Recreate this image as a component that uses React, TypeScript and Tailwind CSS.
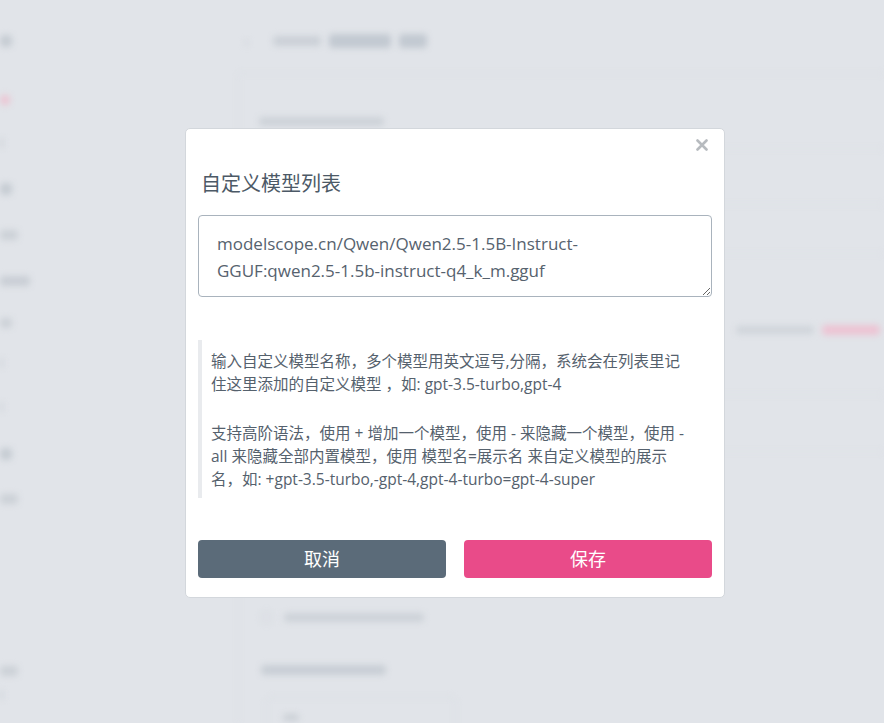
import React from "react";

const font = { fontFamily: '"Open Sans", "Noto Sans CJK SC", sans-serif' };

function Background() {
  return (
    <div className="absolute inset-0 blur-[3px] text-[#9aa3ad]">
      {/* sidebar blurred items */}
      <div className="absolute left-0 top-0 w-[60px] flex flex-col text-[13px]">
        <div className="mt-[35px] h-[12px] w-[12px] bg-[#c6ccd3] rounded-sm" />
        <div className="mt-[48px] h-[10px] w-[10px] bg-[#ecc6d4] rounded-sm" />
        <div className="mt-[33px] h-[10px] w-[3px] bg-[#cdd2d8]" />
        <div className="mt-[35px] h-[12px] w-[12px] bg-[#c6ccd3] rounded-sm" />
        <div className="mt-[35px] h-[10px] w-[18px] bg-[#ccd1d7] rounded-sm" />
        <div className="mt-[36px] h-[10px] w-[30px] bg-[#c9ced5] rounded-sm" />
        <div className="mt-[32px] h-[10px] w-[12px] bg-[#ccd1d7] rounded-sm" />
        <div className="mt-[30px] h-[10px] w-[3px] bg-[#d0d5da]" />
        <div className="mt-[34px] h-[10px] w-[3px] bg-[#d0d5da]" />
        <div className="mt-[36px] h-[12px] w-[12px] bg-[#c6ccd3] rounded-sm" />
        <div className="mt-[34px] h-[10px] w-[18px] bg-[#ccd1d7] rounded-sm" />
        <div className="mt-[162px] h-[10px] w-[18px] bg-[#ccd1d7] rounded-sm" />
        <div className="mt-[14px] h-[10px] w-[3px] bg-[#d0d5da]" />
      </div>
      {/* header */}
      <div className="absolute left-[244px] top-[30px] flex items-center gap-4 h-[22px]">
        <span className="text-[16px] text-[#c2c8cf]">‹</span>
        <div className="h-[10px] w-[48px] bg-[#cbd0d7] rounded-sm ml-2" />
        <div className="h-[14px] w-[62px] bg-[#c2c9d1] rounded-sm -ml-2" />
        <div className="h-[14px] w-[28px] bg-[#c2c9d1] rounded-sm -ml-2" />
      </div>
      {/* main card border */}
      <div className="absolute left-[238px] top-[73px] right-0 bottom-0 border-l border-t border-[#d8dce1]">
        <div className="ml-[20px] mt-[43px] h-[9px] w-[125px] bg-[#cdd2d8] rounded-sm" />
        <div className="mt-[22px] border-t border-[#dbdfe4]" />
        <div className="mt-[55px] border-t border-[#dbdfe4]" />
        <div className="mt-[48px] border-t border-[#dbdfe4]" />
        <div className="ml-[497px] mt-[71px] flex gap-2 items-center">
          <div className="h-[8px] w-[78px] bg-[#cfd4da] rounded-sm" />
          <div className="h-[10px] w-[58px] bg-[#edc3d3] rounded-sm" />
        </div>
        <div className="mt-[59px] border-t border-[#dbdfe4]" />
        <div className="mt-[56px] border-t border-[#dbdfe4]" />
        <div className="ml-[22px] mt-[160px] flex items-center gap-3">
          <div className="h-[11px] w-[11px] border border-[#ccd2d8] rounded-sm" />
          <div className="h-[9px] w-[140px] bg-[#cdd2d8] rounded-sm" />
        </div>
        <div className="ml-[22px] mt-[42px] h-[10px] w-[125px] bg-[#c8ced5] rounded-sm" />
        <div className="ml-[27px] mt-[22px] h-[44px] w-[190px] border border-[#d6dbe0] rounded-md px-4 pt-4">
          <div className="h-[7px] w-[16px] bg-[#cbd0d6] rounded-sm" />
        </div>
      </div>
    </div>
  );
}

export default function App() {
  return (
    <div className="relative w-[884px] h-[723px] overflow-hidden bg-[#e1e4e9]" style={font}>
      <Background />
      <div className="absolute left-[185px] top-[128px] w-[540px] bg-white border border-[#d3d7dc] rounded-[5px] px-3 pt-[33px] pb-[19px]">
        <button className="absolute right-[16px] top-[10px] w-[12px] h-[12px] flex items-center justify-center">
          <svg width="12" height="12" viewBox="0 0 12 12">
            <path d="M1.5 1.5 L10.5 10.5 M10.5 1.5 L1.5 10.5" stroke="#b7bbbf" strokeWidth="2.6" strokeLinecap="round" />
          </svg>
        </button>
        <h2 className="text-[20px] leading-[44px] text-[#4c5966] pl-[3px]">自定义模型列表</h2>
        <textarea
          className="mt-[9px] block w-full h-[82px] border border-[#a9b3bd] rounded-[4px] px-[18px] pt-[14px] text-[17px] leading-[27px] text-[#56626e] resize-y outline-none"
          defaultValue="modelscope.cn/Qwen/Qwen2.5-1.5B-Instruct-GGUF:qwen2.5-1.5b-instruct-q4_k_m.gguf"
          style={font}
        />
        <div className="mt-[43px] border-l-4 border-[#e9ebee] pl-[9px] pr-[4px] pt-[10px] pb-[7px] text-[15.5px] leading-[23px] text-[#55616d] whitespace-nowrap">
          <p>
            输入自定义模型名称，多个模型用英文逗号,分隔，系统会在列表里记
            <br />
            住这里添加的自定义模型 ，如: gpt-3.5-turbo,gpt-4
          </p>
          <p className="mt-[26px]">
            支持高阶语法，使用 + 增加一个模型，使用 - 来隐藏一个模型，使用 -
            <br />
            all 来隐藏全部内置模型，使用 模型名=展示名 来自定义模型的展示
            <br />
            名，如: +gpt-3.5-turbo,-gpt-4,gpt-4-turbo=gpt-4-super
          </p>
        </div>
        <div className="mt-[42px] flex gap-[18px]">
          <button className="flex-1 h-[38px] rounded-[4px] bg-[#5b6b79] text-white text-[18px]">取消</button>
          <button className="flex-1 h-[38px] rounded-[4px] bg-[#e94b89] text-white text-[18px]">保存</button>
        </div>
      </div>
    </div>
  );
}
